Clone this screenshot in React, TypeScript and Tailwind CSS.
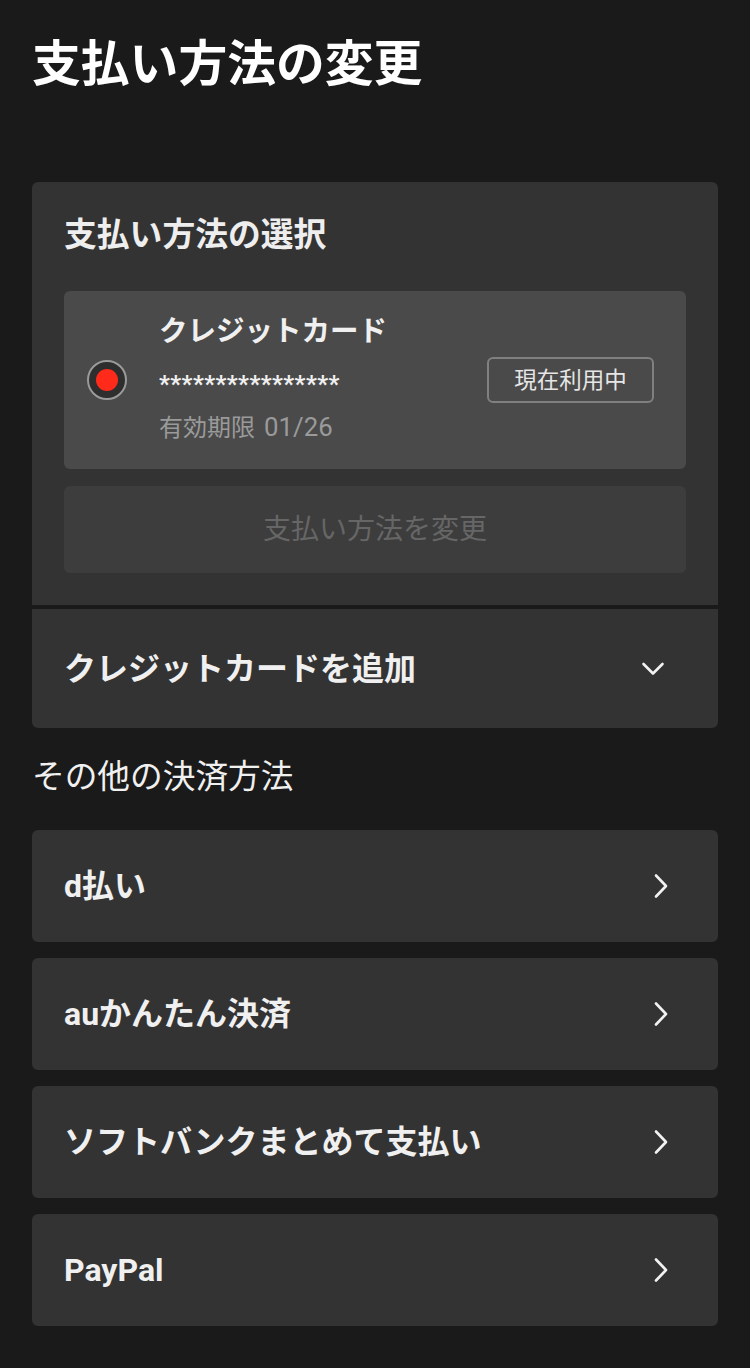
import React from "react";

const font = { fontFamily: 'Roboto, "Noto Sans CJK JP", sans-serif' };

function ChevronRight() {
  return (
    <svg width="16" height="26" viewBox="0 0 16 26" fill="none">
      <path d="M3 2.5 L13 13 L3 23.5" stroke="#f2f2f2" strokeWidth="2.6" strokeLinecap="round" strokeLinejoin="round" />
    </svg>
  );
}

function ChevronDown() {
  return (
    <svg width="24" height="14" viewBox="0 0 24 14" fill="none">
      <path d="M2.5 2 L12 11.5 L21.5 2" stroke="#f2f2f2" strokeWidth="2.6" strokeLinecap="round" strokeLinejoin="round" />
    </svg>
  );
}

function Row({ label }: { label: string }) {
  return (
    <div className="flex h-[112px] items-center justify-between rounded-md bg-[#333333] pl-8 pr-[49px]">
      <span className="text-[32px] font-bold leading-[44px] text-[#f0f0f0]">{label}</span>
      <ChevronRight />
    </div>
  );
}

export default function App() {
  return (
    <div className="min-h-[1368px] bg-[#1a1a1a] px-8 pb-10 pt-[33px]" style={font}>
      <h1 className="text-[48.8px] font-bold leading-[64px] text-white">支払い方法の変更</h1>

      <div className="mt-[85px]">
        <div className="rounded-t-md bg-[#333333] p-8">
          <h2 className="text-[32.8px] font-bold leading-[42px] text-[#eeeeee]">支払い方法の選択</h2>
          <div className="mt-[35px] flex h-[178px] items-center rounded-md bg-[#4a4a4a] pl-[23px] pr-8">
            <div className="flex h-10 w-10 shrink-0 items-center justify-center rounded-full border-2 border-[#9a9a9a] bg-[#2e2e2e]">
              <div className="h-[22px] w-[22px] rounded-full bg-[#ff2a1a]" />
            </div>
            <div className="ml-8 flex flex-1 flex-col self-start pt-[21px]">
              <span className="text-[28.5px] font-bold leading-[40px] text-[#f0f0f0]">クレジットカード</span>
              <span className="mt-[12px] text-[24px] font-bold leading-[40px] tracking-[0.4px] text-[#f0f0f0]">****************</span>
              <span className="mt-[5px] text-[24px] leading-[36px] text-[#9a9a9a]">
                有効期限<span className="ml-[9px] text-[25.8px]">01/26</span>
              </span>
            </div>
            <div className="flex h-[46px] w-[167px] items-center justify-center rounded-md border-2 border-[#808080] text-[22.5px] leading-[30px] text-[#e6e6e6]">
              現在利用中
            </div>
          </div>
          <div className="mt-[17px] flex h-[87px] items-center justify-center rounded-md bg-[#3d3d3d] text-[28px] leading-[40px] text-[#666666]">
            支払い方法を変更
          </div>
        </div>
        <div className="mt-1 flex h-[119px] items-center justify-between rounded-b-md bg-[#333333] pl-8 pr-[53px]">
          <span className="text-[32px] font-bold leading-[44px] text-[#f0f0f0]">クレジットカードを追加</span>
          <ChevronDown />
        </div>
      </div>

      <p className="mt-6 text-[32.7px] leading-[50px] text-[#f0f0f0]">その他の決済方法</p>

      <div className="mt-[28px] flex flex-col gap-4">
        <Row label="d払い" />
        <Row label="auかんたん決済" />
        <Row label="ソフトバンクまとめて支払い" />
        <Row label="PayPal" />
      </div>
    </div>
  );
}
